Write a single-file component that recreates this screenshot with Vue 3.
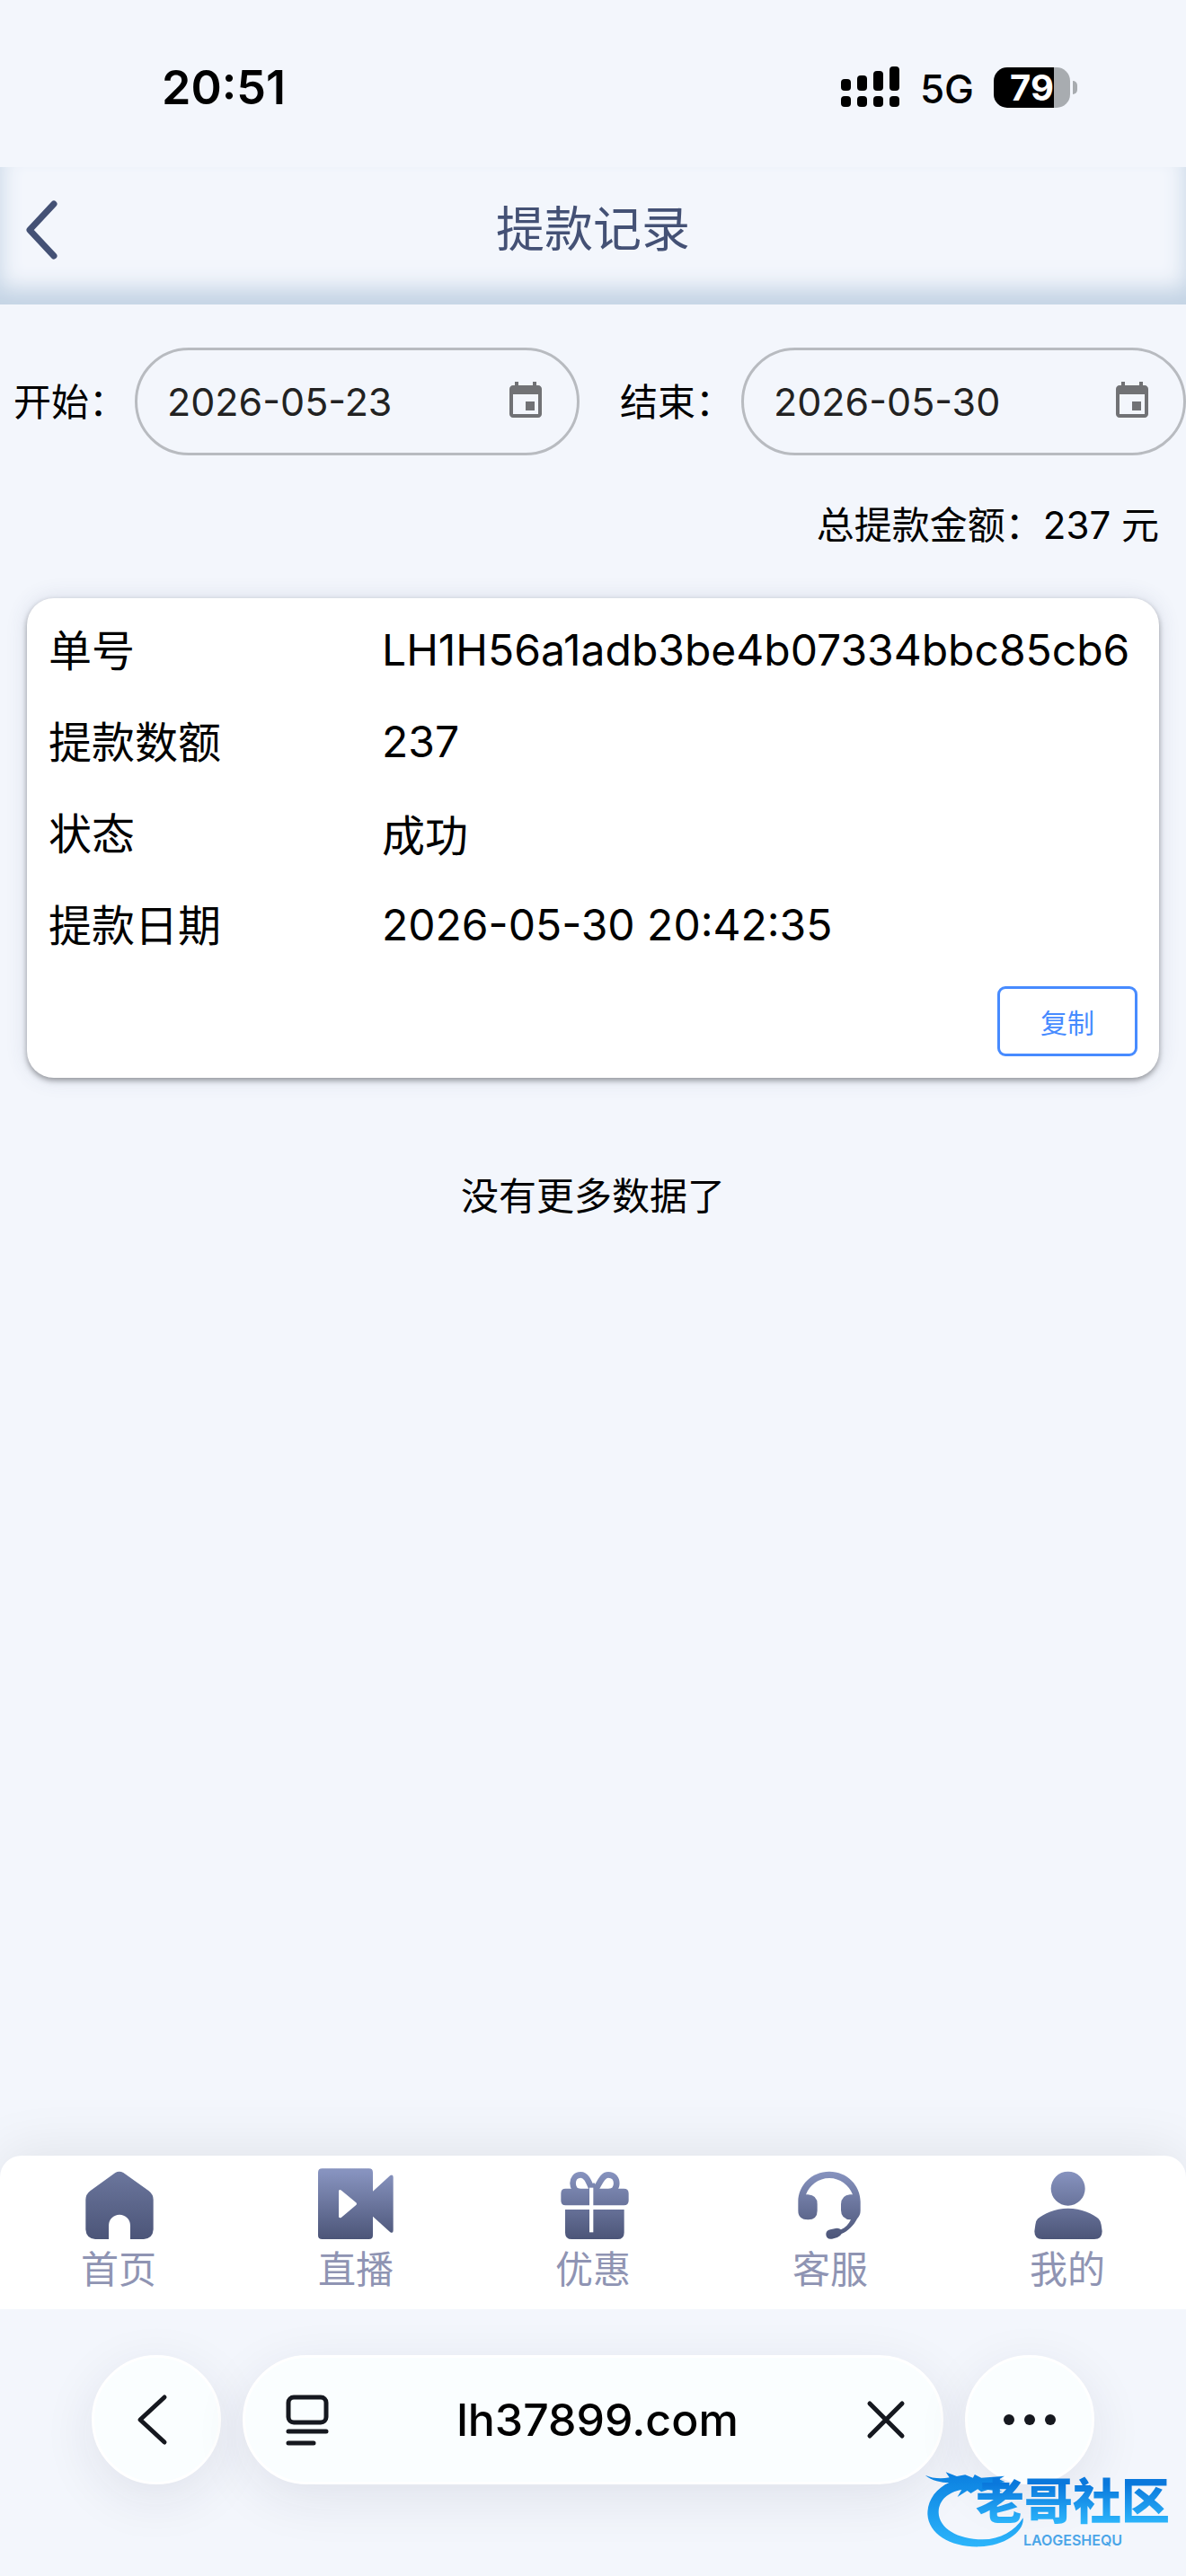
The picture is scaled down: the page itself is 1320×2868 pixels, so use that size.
<template>
  <div class="page">
    <div class="status-bar">
      <span class="time">20:51</span>
      <div class="status-right">
        <svg class="signal" viewBox="0 0 66 46" aria-hidden="true">
          <rect x="0" y="14" width="11" height="13" rx="4" />
          <rect x="18" y="10" width="11" height="17" rx="4" />
          <rect x="36" y="5" width="11" height="22" rx="4" />
          <rect x="54" y="0" width="11" height="27" rx="4" />
          <rect v-for="x in [0, 18, 36, 54]" :key="x" :x="x" y="33" width="11" height="12" rx="4" />
        </svg>
        <span class="network">5G</span>
        <div class="battery"><span class="level">79</span></div>
      </div>
    </div>

    <header class="header">
      <button class="back" aria-label="返回">
        <svg viewBox="0 0 38 68"><path d="M33 5 L6 34 L33 63" /></svg>
      </button>
      <h1>提款记录</h1>
    </header>

    <main class="content">
      <div class="filters">
        <div class="field" v-for="f in filters" :key="f.id">
          <label :for="f.id">{{ f.label }}</label>
          <div class="date-box">
            <input :id="f.id" type="text" v-model="f.value" />
            <svg viewBox="0 0 24 24" aria-hidden="true">
              <path d="M17 12h-5v5h5v-5zM16 1v2H8V1H6v2H5c-1.11 0-1.99.9-1.99 2L3 19c0 1.1.89 2 2 2h14c1.1 0 2-.9 2-2V5c0-1.1-.9-2-2-2h-1V1h-2zm3 18H5V8h14v11z" />
            </svg>
          </div>
        </div>
      </div>

      <p class="total">总提款金额：237 元</p>

      <section class="card">
        <dl>
          <div class="row" v-for="r in rows" :key="r.label">
            <dt>{{ r.label }}</dt>
            <dd>{{ r.value }}</dd>
          </div>
        </dl>
        <button class="copy" @click="copy">复制</button>
      </section>

      <p class="no-more">没有更多数据了</p>
    </main>

    <nav class="tabbar">
      <a v-for="t in tabs" :key="t.label" href="#" class="tab">
        <svg :viewBox="t.box" aria-hidden="true">
          <defs>
            <linearGradient :id="'grad-' + t.id" gradientUnits="userSpaceOnUse" x1="0" y1="144" x2="0" y2="370">
              <stop offset="0" :stop-color="t.top || '#8793bf'" />
              <stop offset="1" stop-color="#4c5578" />
            </linearGradient>
          </defs>
          <path v-if="t.line" :d="t.line" fill="none" :stroke="`url(#grad-${t.id})`" stroke-width="20" />
          <path :d="t.path" :fill="`url(#grad-${t.id})`" fill-rule="evenodd" />
          <path v-if="t.cut" :d="t.cut" fill="#fff" />
        </svg>
        <span>{{ t.label }}</span>
      </a>
    </nav>

    <footer class="browser-bar">
      <button class="round" aria-label="后退">
        <svg width="46" height="58" viewBox="0 0 46 58"><path d="M32 4 L5 29 L32 54" /></svg>
      </button>
      <div class="address">
        <button aria-label="页面菜单">
          <svg width="48" height="56" viewBox="0 0 48 56">
            <rect x="3" y="3" width="42" height="28" rx="6" />
            <path d="M3 41 H45 M3 54 H31" />
          </svg>
        </button>
        <input type="text" value="lh37899.com" aria-label="地址" />
        <button aria-label="停止">
          <svg width="44" height="44" viewBox="0 0 44 44"><path d="M4 4 L40 40 M40 4 L4 40" /></svg>
        </button>
      </div>
      <button class="round" aria-label="更多">
        <svg class="dots" width="60" height="14" viewBox="0 0 60 14">
          <circle cx="7" cy="7" r="6" /><circle cx="30" cy="7" r="6" /><circle cx="53" cy="7" r="6" />
        </svg>
      </button>
      <div class="badge">
        <svg viewBox="50 30 340 265" aria-hidden="true">
          <defs>
            <linearGradient id="dragon" x1="0" y1="0" x2="0" y2="1">
              <stop offset="0" stop-color="#0a7fe0" />
              <stop offset="1" stop-color="#2cb5fb" />
            </linearGradient>
          </defs>
          <path
            fill="url(#dragon)"
            d="M52 47 C75 58 105 60 133 55 L121 37 L158 51 L186 46 L212 56 L218 45 L240 56 L318 50 L300 61 L320 70 L282 77 L314 84 L284 90 L311 102 L262 96 L240 103 L228 94 L205 108 L193 99 L160 120 L174 96 C128 104 97 132 97 172 C98 225 160 262 245 263 C304 262 352 234 380 190 C386 236 320 284 235 287 C140 290 63 245 60 178 C59 132 88 92 132 72 C105 72 75 66 52 47 Z"
          />
        </svg>
        <div class="badge-text">
          <strong>老哥社区</strong>
          <small>LAOGESHEQU</small>
        </div>
      </div>
    </footer>
  </div>
</template>

<script setup>
import { ref } from 'vue'

const filters = ref([
  { id: 'start', label: '开始：', value: '2026-05-23' },
  { id: 'end', label: '结束：', value: '2026-05-30' }
])

const rows = [
  { label: '单号', value: 'LH1H56a1adb3be4b07334bbc85cb6' },
  { label: '提款数额', value: '237' },
  { label: '状态', value: '成功' },
  { label: '提款日期', value: '2026-05-30 20:42:35' }
]

const tabs = [
  {
    id: 'home', label: '首页', box: '270 133 252 240', top: '#6b769d',
    path: 'M385 148 Q398 140 412 148 L496 208 Q512 220 512 238 V338 Q510 368 480 370 H435 V324 A36 36 0 0 0 363 324 V370 H318 Q288 368 286 338 V238 Q286 220 302 208 Z'
  },
  {
    id: 'live', label: '直播', box: '1062 133 252 240',
    path: 'M1076 134 H1232 Q1245 134 1245 147 V210 L1303 157 Q1313 152 1313 163 V341 Q1313 352 1303 347 L1245 294 V357 Q1245 370 1232 370 H1076 Q1062 370 1062 357 V147 Q1062 134 1076 134 Z M1131 209 V295 Q1133 302 1140 297 L1188 257 Q1194 252 1188 247 L1140 207 Q1133 202 1131 209 Z'
  },
  {
    id: 'gift', label: '优惠', box: '534 133 252 240',
    line: 'M656 202 C646 178 638 155 619 155 C584 155 584 212 619 212 M670 202 C684 178 692 155 711 155 C748 155 748 212 711 212',
    path: 'M568 201 H648 L655 185 L664 182 L680 201 H763 Q779 201 779 217 V241 Q779 257 763 257 H568 Q553 257 553 241 V217 Q553 201 568 201 Z M567 271 H764 V348 Q764 370 742 370 H589 Q567 370 567 348 Z',
    cut: 'M648 198 H661 V347 H648 Z'
  },
  {
    id: 'service', label: '客服', box: '126 133 252 240',
    path: 'M145 245 C145 190 190 144 249 144 C308 144 353 190 353 245 V275 Q353 290 342 302 C330 325 312 343 290 352 Q286 360 276 364 L258 369 Q240 372 238 355 Q237 342 252 338 L270 334 Q280 331 288 338 C302 332 314 320 321 305 Q288 303 288 273 V253 Q290 223 318 221 H327 C315 190 285 166 249 166 C213 166 183 190 171 221 H178 Q209 223 209 253 V275 Q209 305 178 305 Q145 305 145 275 Z'
  },
  {
    id: 'mine', label: '我的', box: '918 133 252 240',
    path: 'M989 201 A57 57 0 1 1 1103 201 A57 57 0 1 1 989 201 Z M1046 267 C1090 267 1130 285 1148 302 Q1155 309 1157 322 L1160 344 Q1160 370 1134 370 H960 Q934 370 934 344 L937 322 Q938 309 945 302 C965 285 1002 267 1046 267 Z'
  }
]

function copy() {
  navigator.clipboard?.writeText(rows[0].value)
}
</script>

<style>
body { background: #f3f6fc; }
</style>

<style scoped>
.page {
  min-height: 100vh; display: flex; flex-direction: column; overflow: hidden;
  font-family: Inter, "Noto Sans CJK SC", sans-serif; color: #000; background: #f3f6fc;
}
button { padding: 0; border: 0; background: none; font-family: inherit; display: flex; align-items: center; justify-content: center; }
input { border: 0; padding: 0; background: none; outline: none; min-width: 0; font-family: inherit; }

.status-bar {
  height: 186px; padding: 0 129px 0 180px; box-sizing: border-box;
  display: flex; justify-content: space-between; align-items: center;
}
.time { font-size: 52px; font-weight: 600; line-height: 60px; padding-top: 10px; }
.status-right { display: flex; align-items: center; gap: 22px; padding-top: 8px; }
.signal { width: 66px; height: 46px; }
.network { font-size: 44px; line-height: 48px; font-weight: 500; padding-top: 4px; }
.battery {
  width: 85px; height: 45px; border-radius: 15px; position: relative;
  background: linear-gradient(90deg, #000 79%, #a8acb0 79%);
  display: flex; align-items: center; justify-content: center;
}
.battery::after {
  content: ""; position: absolute; right: -8px; top: 15px; width: 5px; height: 15px;
  border-radius: 0 5px 5px 0; background: #a8acb0;
}
.level { color: #fff; font-size: 40px; line-height: 45px; font-weight: 700; }

.header {
  height: 153px; padding: 0 27px 14px; box-sizing: border-box;
  display: grid; grid-template-columns: 1fr auto 1fr; align-items: center;
  box-shadow: inset 0 -18px 24px #c3d3e4;
}
.back { width: 38px; height: 68px; }
.back svg { width: 38px; height: 68px; fill: none; stroke: #445175; stroke-width: 7; stroke-linecap: round; stroke-linejoin: round; }
h1 { margin: 0; font-size: 54px; line-height: 72px; font-weight: 400; color: #445175; }

.content { flex: 1; }
.filters { display: flex; justify-content: space-between; gap: 45px; padding: 48px 0 0 15px; }
.field { flex: 1; display: flex; align-items: center; gap: 9px; font-size: 42px; min-width: 0; }
.field label { white-space: nowrap; padding-bottom: 6px; }
.date-box {
  flex: 1; min-width: 0; height: 120px; box-sizing: border-box; padding: 0 33px;
  display: flex; align-items: center; border: 3px solid #b8bbc0; border-radius: 60px;
}
.date-box input { flex: 1; font-size: 43px; color: #222; }
.date-box input, dd { font-feature-settings: "case"; }
.date-box svg { width: 48px; height: 48px; fill: #717275; }
.total { margin: 48px 30px 0; text-align: right; font-size: 42px; line-height: 60px; }

.card {
  margin: 51px 30px 0; padding: 6px 24px 24px; background: #fff; border-radius: 30px;
  box-shadow: 0 3px 6px rgba(0, 0, 0, 0.36), 0 0 24px rgba(60, 70, 110, 0.14);
}
dl { margin: 0; }
.row { display: flex; align-items: center; height: 102px; font-size: 48px; }
dt { width: 371px; flex: none; padding-bottom: 4px; }
dd { margin: 0; white-space: nowrap; }
.copy {
  width: 156px; height: 78px; margin: 18px 0 0 auto; font-size: 30px; color: #478bff;
  border: 3px solid #478bff; border-radius: 9px;
}
.no-more { margin: 102px 0 0; text-align: center; font-size: 42px; line-height: 60px; }

.tabbar {
  display: flex; height: 171px; background: #fff; border-radius: 24px 24px 0 0;
  box-shadow: 0 -6px 60px rgba(0, 0, 0, 0.08);
}
.tab {
  flex: 1; display: flex; flex-direction: column; align-items: center; gap: 3px; padding-top: 14px;
  text-decoration: none; color: #8f94b3; font-size: 42px; line-height: 60px;
}
.tab svg { width: 84px; height: 80px; flex: none; }

.browser-bar {
  position: relative; display: flex; gap: 24px; padding: 51px 102px 102px; background: #f3f6fc;
}
.round, .address {
  height: 144px; box-sizing: border-box; border: 3px solid #fff; border-radius: 72px; background: #fafeff;
  box-shadow: 0 15px 60px rgba(30, 35, 70, 0.09);
}
.round { width: 144px; flex: none; }
.address { flex: 1; min-width: 0; display: flex; align-items: center; padding: 0 39px 0 45px; }
.address input { flex: 1; text-align: center; font-size: 50px; font-weight: 500; }
.browser-bar button svg { fill: none; stroke: #15181f; stroke-width: 5; stroke-linecap: round; stroke-linejoin: round; overflow: visible; }
.browser-bar .dots { fill: #15181f; stroke: none; }

.badge { position: absolute; right: 18px; bottom: 30px; display: flex; align-items: center; }
.badge svg { width: 113px; height: 88px; }
.badge-text { display: flex; flex-direction: column; align-items: center; margin: 0 0 0 -56px; }
.badge strong {
  font-size: 54px; line-height: 68px; font-weight: 900;
  background: linear-gradient(#0a78dc 20%, #2cb5fb 85%); background-clip: text; color: transparent;
}
.badge small { font-size: 16px; line-height: 16px; font-weight: 600; color: #4aa5e8; }
</style>
